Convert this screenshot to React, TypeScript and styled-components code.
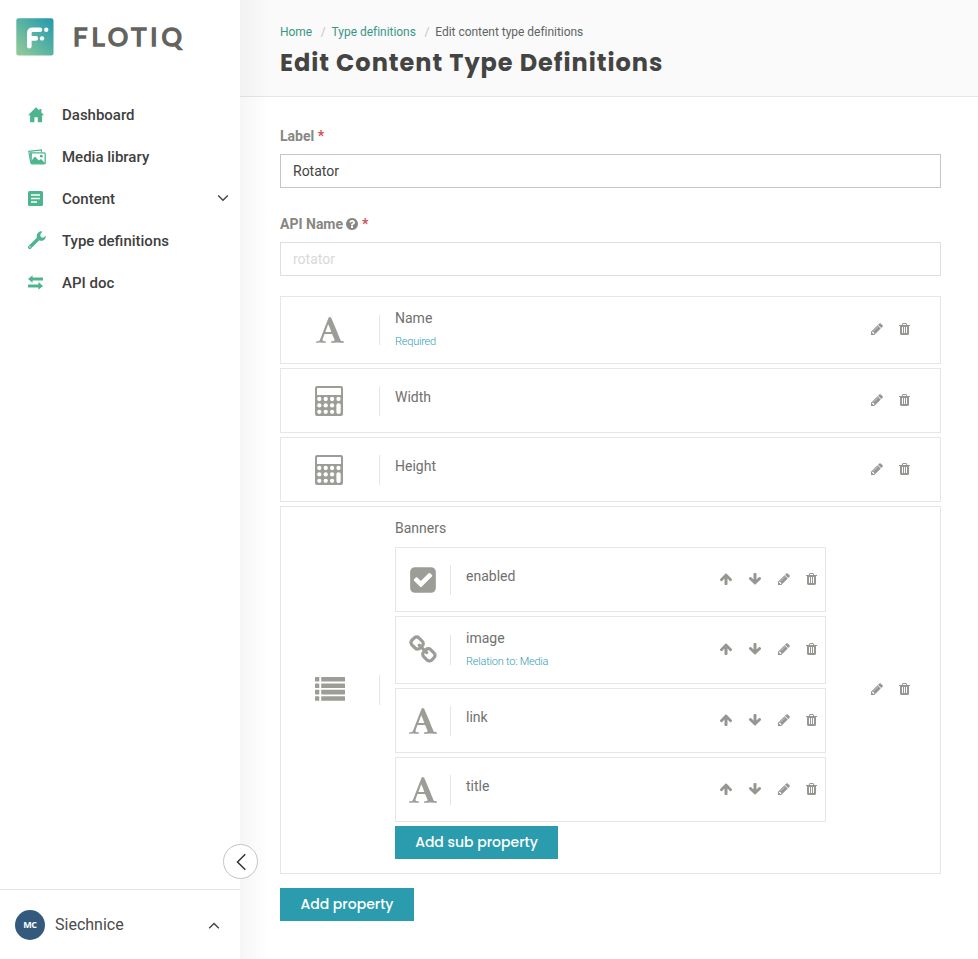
import React from "react";
import styled, { createGlobalStyle } from "styled-components";

const GlobalStyle = createGlobalStyle`
  * { box-sizing: border-box; }
  body { margin: 0; background: #fff; font-family: Roboto, "Liberation Sans", sans-serif; color: #6a6a68; }
`;

const Page = styled.div`
  display: grid;
  grid-template-columns: 240px 1fr;
  width: 100%;
  height: 959px;
  overflow: hidden;
`;

/* Sidebar */
const Sidebar = styled.aside`
  position: relative;
  display: flex;
  flex-direction: column;
  background: #fff;
  z-index: 1;
`;
const Brand = styled.div`
  display: flex;
  align-items: center;
  height: 73px;
  padding-left: 16px;
`;
const Wordmark = styled.span`
  margin: -1px 0 0 19px;
  font: 400 25.5px/37px Lato, sans-serif;
  letter-spacing: 4px;
  color: #63635f;
  -webkit-text-stroke: 1.5px #63635f;
  stroke-linejoin: round;
`;
const Nav = styled.nav`
  display: flex;
  flex-direction: column;
  padding-top: 21px;
  flex: 1;
`;
const NavItem = styled.a`
  display: flex;
  align-items: center;
  height: 42px;
  padding: 0 11px 0 28px;
  font-size: 15px;
  font-weight: 500;
  color: #3f3f3e;
`;
const NavIcon = styled.span`
  display: flex;
  width: 34px;
  color: #4db58e;
`;
const Chevron = styled.svg`
  margin-left: auto;
  margin-top: -3px;
`;
const AccountChevron = styled(Chevron)`
  margin-top: 0;
`;
const Account = styled.div`
  display: flex;
  align-items: center;
  height: 70px;
  padding: 0 20px 0 15px;
  border-top: 1px solid #e4e4e4;
  font-size: 16px;
  color: #4b4b4a;
`;
const Avatar = styled.span`
  display: grid;
  place-items: center;
  width: 30px;
  height: 30px;
  margin-right: 10px;
  border-radius: 50%;
  background: #33597d;
  color: #fff;
  font: 700 9px/1 "Open Sans", sans-serif;
  letter-spacing: -0.3px;
`;
const Collapse = styled.button`
  position: absolute;
  left: 223px;
  top: 844px;
  display: grid;
  place-items: center;
  width: 35px;
  height: 35px;
  padding: 0;
  border: 1px solid #c4c4c4;
  border-radius: 50%;
  background: #fff;
`;

/* Main column */
const Main = styled.main`
  position: relative;
  &::before {
    content: "";
    position: absolute;
    inset: 0 auto 0 0;
    width: 30px;
    background: linear-gradient(90deg, rgba(0, 0, 0, 0.035), rgba(0, 0, 0, 0));
  }
`;
const Header = styled.header`
  height: 97px;
  padding: 24px 40px 0;
  background: #fafafa;
  border-bottom: 1px solid #e6e6e6;
`;
const Crumbs = styled.div`
  display: flex;
  font-size: 12px;
  line-height: 16px;
  letter-spacing: -0.03px;
  color: #5f6463;
`;
const CrumbLink = styled.a`
  color: #399786;
  &::after {
    content: "/";
    margin: 0 6px 0 8.5px;
    color: #c4c4c4;
  }
`;
const Title = styled.h1`
  margin: 5px 0 0;
  font: 700 24px/36px Poppins, Inter, sans-serif;
  letter-spacing: 0.98px;
  white-space: nowrap;
  color: #444443;
`;
const Content = styled.div`
  padding: 29px 37px 0 40px;
`;
const Label = styled.label`
  display: flex;
  align-items: center;
  height: 20px;
  font-size: 14px;
  font-weight: 700;
  color: #878782;
  gap: 3.5px;
`;
const Help = styled.span`
  display: flex;
  margin: 0 -0.5px 0 -1.5px;
`;
const Star = styled.span`
  color: #d2504f;
`;
const Input = styled.input`
  display: block;
  width: 100%;
  height: 34px;
  margin: 8px 0 26px;
  padding: 0 12px;
  border: 1px solid #c6c6c6;
  background: #fff;
  color: #444;
  font: 400 14px Roboto, sans-serif;
  &:disabled {
    border-color: #dedede;
    color: #d9d9d9;
    margin-bottom: 20px;
  }
`;
const Stack = styled.div`
  display: flex;
  flex-direction: column;
  gap: 4px;
`;
const Card = styled.div<{ $h: number; $nested?: boolean }>`
  display: grid;
  grid-template-columns: ${(p) => (p.$nested ? "55px 1fr auto" : "99px 1fr auto")};
  align-items: center;
  width: ${(p) => (p.$nested ? "431px" : "100%")};
  height: ${(p) => p.$h}px;
  padding-right: ${(p) => (p.$nested ? 8 : 30)}px;
  border: 1px solid #e6e6e6;
`;
const TypeCell = styled.div`
  display: flex;
  justify-content: center;
  align-items: center;
  height: 30px;
  border-right: 1px solid #e6e6e6;
  color: #9d9d98;
`;
const Body = styled.div<{ $top: number }>`
  align-self: start;
  padding: ${(p) => p.$top}px 0 0 15px;
`;
const Name = styled.div`
  font-size: 14px;
  line-height: 20px;
  color: #70706e;
`;
const Note = styled.div`
  margin-top: 6px;
  font-size: 11px;
  line-height: 16px;
  font-weight: 300;
  letter-spacing: -0.22px;
  color: #2e9db0;
`;
const Actions = styled.div`
  display: flex;
  align-items: center;
  gap: 15px;
  color: #969692;
  margin-top: -2px;
`;
const SubList = styled(Stack)`
  margin-top: 9px;
`;
const Button = styled.button<{ $w: number; $mt?: number }>`
  width: ${(p) => p.$w}px;
  height: 33px;
  margin-top: ${(p) => p.$mt || 0}px;
  padding: 0;
  border: 0;
  background: #2b9bae;
  color: #fff;
  font: 500 14px/33px Poppins, Inter, sans-serif;
`;

const P = {
  up: "M1675 971q0 51-37 90l-75 75q-38 38-91 38-54 0-90-38l-294-293v704q0 52-37.5 84.5t-90.5 32.5h-128q-53 0-90.5-32.5t-37.5-84.5v-704l-294 293q-36 38-90 38t-90-38l-75-75q-38-38-38-90 0-53 38-91l651-651q35-37 90-37 54 0 91 37l651 651q37 39 37 91z",
  down: "M1675 832q0 53-37 90l-651 652q-39 37-91 37-53 0-90-37l-651-652q-38-36-38-90 0-53 38-91l74-75q39-37 91-37 53 0 90 37l294 294v-704q0-52 38-90t90-38h128q52 0 90 38t38 90v704l294-294q37-37 90-37 52 0 91 37l75 75q37 39 37 91z",
  trash: "M704 1376v-704q0-14-9-23t-23-9h-64q-14 0-23 9t-9 23v704q0 14 9 23t23 9h64q14 0 23-9t9-23zm256 0v-704q0-14-9-23t-23-9h-64q-14 0-23 9t-9 23v704q0 14 9 23t23 9h64q14 0 23-9t9-23zm256 0v-704q0-14-9-23t-23-9h-64q-14 0-23 9t-9 23v704q0 14 9 23t23 9h64q14 0 23-9t9-23zm-544-992h448l-48-117q-7-9-17-11h-317q-10 2-17 11zm928 32v64q0 14-9 23t-23 9h-96v948q0 83-47 143.5t-113 60.5h-832q-66 0-113-58.5t-47-141.5v-952h-96q-14 0-23-9t-9-23v-64q0-14 9-23t23-9h309l70-167q15-37 54-63t79-26h320q40 0 79 26t54 63l70 167h309q14 0 23 9t9 23z",
  pencil: "M491 1536l91-91-235-235-91 91v107h128v128h107zm523-928q0-22-22-22-10 0-17 7l-542 542q-7 7-7 17 0 22 22 22 10 0 17-7l542-542q7-7 7-17zm-54-192l416 416-832 832h-416v-416zm683 96q0 53-37 90l-166 166-416-416 166-165q36-38 90-38 53 0 91 38l235 234q37 39 37 91z",
  check: "M813 1299l614-614q19-19 19-45t-19-45l-102-102q-19-19-45-19t-45 19l-467 467-211-211q-19-19-45-19t-45 19l-102 102q-19 19-19 45t19 45l358 358q19 19 45 19t45-19zm851-883v960q0 119-84.5 203.5t-203.5 84.5h-960q-119 0-203.5-84.5t-84.5-203.5v-960q0-119 84.5-203.5t203.5-84.5h960q119 0 203.5 84.5t84.5 203.5z",
  link: "M1520 1216q0-40-28-68l-208-208q-28-28-68-28-42 0-72 32 3 3 19 18.5t21.5 21.5 15 19 13 25.5 3.5 27.5q0 40-28 68t-68 28q-15 0-27.5-3.5t-25.5-13-19-15-21.5-21.5-18.5-19q-33 31-33 73 0 40 28 68l206 207q27 27 68 27 40 0 68-26l147-146q28-28 28-67zm-703-705q0-40-28-68l-206-207q-28-28-68-28-39 0-68 27l-147 146q-28 28-28 67 0 40 28 68l208 208q27 27 68 27 42 0 72-31-3-3-19-18.5t-21.5-21.5-15-19-13-25.5-3.5-27.5q0-40 28-68t68-28q15 0 27.5 3.5t25.5 13 19 15 21.5 21.5 18.5 19q33-31 33-73zm895 705q0 120-85 203l-147 146q-83 83-203 83-121 0-204-85l-206-207q-83-83-83-203 0-123 88-209l-88-88q-86 88-208 88-120 0-204-84l-208-208q-84-84-84-204t85-203l147-146q83-83 203-83 121 0 204 85l206 207q83 83 83 203 0 123-88 209l88 88q86-88 208-88 120 0 204 84l208 208q84 84 84 204z",
  font: "M789 559l-170 450q33 0 136.5 2t160.5 2q19 0 57-2-87-253-184-452zm-725 1105l2-79q23-7 56-12.5t57-10.5 49.5-14.5 44.5-29 31-50.5l237-616 280-724h128q8 14 11 21l205 480q33 78 106 257.5t114 274.5q15 34 58 144.5t72 168.5q20 45 35 57 19 15 88 29.5t84 20.5q6 38 6 57 0 5-.5 13.5t-.5 12.5q-63 0-190-8t-191-8q-76 0-215 7t-178 8q0-43 4-78l131-28q1 0 12.5-2.5t15.5-3.5 14.5-4.5 15-6.5 11-8 9-11 2.5-14q0-16-31-96.5t-72-177.5-42-100l-450-2q-26 58-76.5 195.5t-50.5 162.5q0 22 14 37.5t43.5 24.5 48.5 13.5 57 8.5 41 4q1 19 1 58 0 9-2 27-58 0-174.5-10t-174.5-10q-8 0-26.5 4t-21.5 4q-80 14-188 14z",
  help: "M1024 1376v-192q0-14-9-23t-23-9h-192q-14 0-23 9t-9 23v192q0 14 9 23t23 9h192q14 0 23-9t9-23zm256-672q0-88-55.5-163t-138.5-116-170-41q-243 0-371 213-15 24 8 42l132 100q7 6 19 6 16 0 25-12 53-68 86-92 34-24 86-24 48 0 85.5 26t37.5 59q0 38-20 61t-68 45q-63 28-115.5 86.5t-52.5 125.5v36q0 14 9 23t23 9h192q14 0 23-9t9-23q0-19 21.5-49.5t54.5-49.5q32-18 49-28.5t46-35 44.5-48 28-60.5 12.5-81zm384 192q0 209-103 385.5t-279.5 279.5-385.5 103-385.5-103-279.5-279.5-103-385.5 103-385.5 279.5-279.5 385.5-103 385.5 103 279.5 279.5 103 385.5z",
};

const Glyph = ({ d, size = 14 }: { d: string; size?: number }) => (
  <svg width={size} height={size} viewBox="0 0 1792 1792" fill="currentColor"><path d={d} /></svg>
);

const TrashIcon = () => (
  <svg width="11" height="14" viewBox="192 0 1408 1792" fill="currentColor"><path d={P.trash} /></svg>
);

const Calculator = () => (
  <svg width="30" height="30" viewBox="0 0 30 30">
    <rect x="0" y="0" width="28" height="30" rx="2" fill="currentColor" />
    <rect x="2" y="2" width="24" height="7" rx=".6" fill="#fff" />
    {[13, 19.4, 25.8].map((y) =>
      [4.3, 10.7, 17.1, 23.5].map((x) =>
        x > 20 && y > 15 ? null : <circle key={`${x}-${y}`} cx={x} cy={y} r="2.15" fill="#fff" />
      )
    )}
    <rect x="21.4" y="17.2" width="4.3" height="10.7" rx="2" fill="#fff" />
  </svg>
);

const ListIcon = () => (
  <svg width="30" height="26" viewBox="0 0 30 26" fill="currentColor">
    {[0, 6.4, 12.8, 19.2].map((y) => (
      <g key={y}>
        <rect x="0" y={y} width="4.3" height="4.6" rx=".6" />
        <rect x="6.2" y={y} width="23.8" height="4.6" rx=".6" />
      </g>
    ))}
  </svg>
);

const typeIcons: Record<string, React.ReactNode> = {
  text: <Glyph d={P.font} size={30} />,
  number: <Calculator />,
  list: <ListIcon />,
  bool: <Glyph d={P.check} size={30} />,
  relation: <Glyph d={P.link} size={30} />,
};

type Prop = { name: string; type: string; note?: string };

const PropertyCard = ({ p, nested, children }: { p: Prop; nested?: boolean; children?: React.ReactNode }) => (
  <Card $h={children ? 368 : p.note ? 68 : 65} $nested={nested}>
    <TypeCell>{typeIcons[p.type]}</TypeCell>
    <Body $top={p.note || children ? 11 : 18}>
      <Name>{p.name}</Name>
      {p.note && <Note>{p.note}</Note>}
      {children}
    </Body>
    <Actions>
      {nested && <Glyph d={P.up} />}
      {nested && <Glyph d={P.down} />}
      <Glyph d={P.pencil} />
      <TrashIcon />
    </Actions>
  </Card>
);

const fields: Prop[] = [
  { name: "Name", type: "text", note: "Required" },
  { name: "Width", type: "number" },
  { name: "Height", type: "number" },
];
const subFields: Prop[] = [
  { name: "enabled", type: "bool" },
  { name: "image", type: "relation", note: "Relation to: Media" },
  { name: "link", type: "text" },
  { name: "title", type: "text" },
];

const Logo = () => (
  <svg width="38" height="38" viewBox="0 0 38 38">
    <defs>
      <linearGradient id="logo" x1="0" y1="1" x2="1" y2="0">
        <stop offset="0" stopColor="#99cb98" />
        <stop offset=".5" stopColor="#58b3a2" />
        <stop offset="1" stopColor="#2498ae" />
      </linearGradient>
    </defs>
    <rect x=".3" y=".3" width="37.2" height="37.2" rx="2.2" fill="url(#logo)" />
    <path d="M13.3 28.2V15.2q0-3.5 3.5-3.5h7.2M14 20.4h5.8" fill="none" stroke="#fff" strokeWidth="4.6" strokeLinecap="round" />
    <circle cx="30.2" cy="11.8" r="2.2" fill="#fff" />
    <circle cx="26" cy="20.4" r="2.2" fill="#fff" />
  </svg>
);

const HomeIcon = () => (
  <svg width="17" height="16" viewBox="0 0 17 16" fill="currentColor">
    <path d="M8 .3 0 8.2h2.1V15.2h4.3v-4.9h3.4v4.9h4.3V8.2h2.1L13.4 5.5V1.9h-2v1.7z" />
  </svg>
);
const MediaIcon = () => (
  <svg width="19" height="16" viewBox="0 0 19 16">
    <path d="M2.6 13 .8 2.4 13.4 1v1.7" fill="none" stroke="currentColor" strokeWidth="1.2" />
    <rect x="3" y="3.8" width="14.2" height="11" rx="1" fill="#fff" stroke="currentColor" strokeWidth="1.3" />
    <path d="M3 14.2v-2l4-4.8 3.8 4 2.2-1.5 4.2 4.3v.6H3z" fill="currentColor" />
    <circle cx="13.3" cy="7.2" r="1.4" fill="currentColor" />
    <path d="M2 3.3h1.6v8.6z" fill="currentColor" />
  </svg>
);
const ContentIcon = () => (
  <svg width="16" height="16" viewBox="0 0 16 16">
    <rect x="0" y="0" width="15" height="15" rx="1.5" fill="currentColor" />
    <path d="M3 4h9M3 7.5h9M3 11h6" stroke="#fff" strokeWidth="1.7" />
  </svg>
);
const WrenchIcon = () => (
  <svg width="18" height="20" viewBox="0 0 18 20">
    <path d="M1.8 16.3 11 7" stroke="currentColor" strokeWidth="3.5" strokeLinecap="round" />
    <path d="M14.3.4A4.8 4.8 0 0 0 8.7 5.2c0 2.7 2.2 4.6 4.7 4.6 2.4 0 4.5-2 4.5-5l-2.7 2-2.3-.5-.7-2.5z" fill="currentColor" />
    <circle cx="2.1" cy="15.9" r=".7" fill="#fff" />
  </svg>
);
const SwapIcon = () => (
  <svg width="16" height="17" viewBox="0 0 16 17" fill="currentColor">
    <path d="M0 4 4.6.2v2.3H15v3H4.6v2.2zM15 10.9l-4.6 3.8v-2.3H0v-3h10.4V7z" />
  </svg>
);

const nav = [
  { label: "Dashboard", icon: <HomeIcon /> },
  { label: "Media library", icon: <MediaIcon /> },
  { label: "Content", icon: <ContentIcon />, expandable: true },
  { label: "Type definitions", icon: <WrenchIcon /> },
  { label: "API doc", icon: <SwapIcon /> },
];

export default function App() {
  return (
    <>
      <GlobalStyle />
      <Page>
        <Sidebar>
          <Brand>
            <Logo />
            <Wordmark>FLOTIQ</Wordmark>
          </Brand>
          <Nav>
            {nav.map((n) => (
              <NavItem key={n.label}>
                <NavIcon>{n.icon}</NavIcon>
                {n.label}
                {n.expandable && (
                  <Chevron width="12" height="8" viewBox="0 0 12 8" fill="none" stroke="#444" strokeWidth="1.4">
                    <path d="m1.2 1.5 4.8 4.8 4.8-4.8" />
                  </Chevron>
                )}
              </NavItem>
            ))}
          </Nav>
          <Account>
            <Avatar>MC</Avatar>
            Siechnice
            <AccountChevron width="12" height="8" viewBox="0 0 12 8" fill="none" stroke="#444" strokeWidth="1.4">
              <path d="m1.2 7.3 4.8-4.8 4.8 4.8" />
            </AccountChevron>
          </Account>
          <Collapse aria-label="Collapse menu">
            <svg width="12" height="18" viewBox="0 0 12 18" fill="none" stroke="#333" strokeWidth="1.5">
              <path d="M10.3 1.2 2.5 9l7.8 7.8" />
            </svg>
          </Collapse>
        </Sidebar>
        <Main>
          <Header>
            <Crumbs>
              <CrumbLink>Home</CrumbLink>
              <CrumbLink>Type definitions</CrumbLink>
              <span>Edit content type definitions</span>
            </Crumbs>
            <Title>Edit Content Type Definitions</Title>
          </Header>
          <Content>
            <Label>Label <Star>*</Star></Label>
            <Input defaultValue="Rotator" />
            <Label>API Name <Help><Glyph d={P.help} /></Help> <Star>*</Star></Label>
            <Input defaultValue="rotator" disabled />
            <Stack>
              {fields.map((p) => <PropertyCard key={p.name} p={p} />)}
              <PropertyCard p={{ name: "Banners", type: "list" }}>
                <SubList>
                  {subFields.map((p) => <PropertyCard key={p.name} p={p} nested />)}
                  <Button $w={163}>Add sub property</Button>
                </SubList>
              </PropertyCard>
            </Stack>
            <Button $w={134} $mt={14}>Add property</Button>
          </Content>
        </Main>
      </Page>
    </>
  );
}
